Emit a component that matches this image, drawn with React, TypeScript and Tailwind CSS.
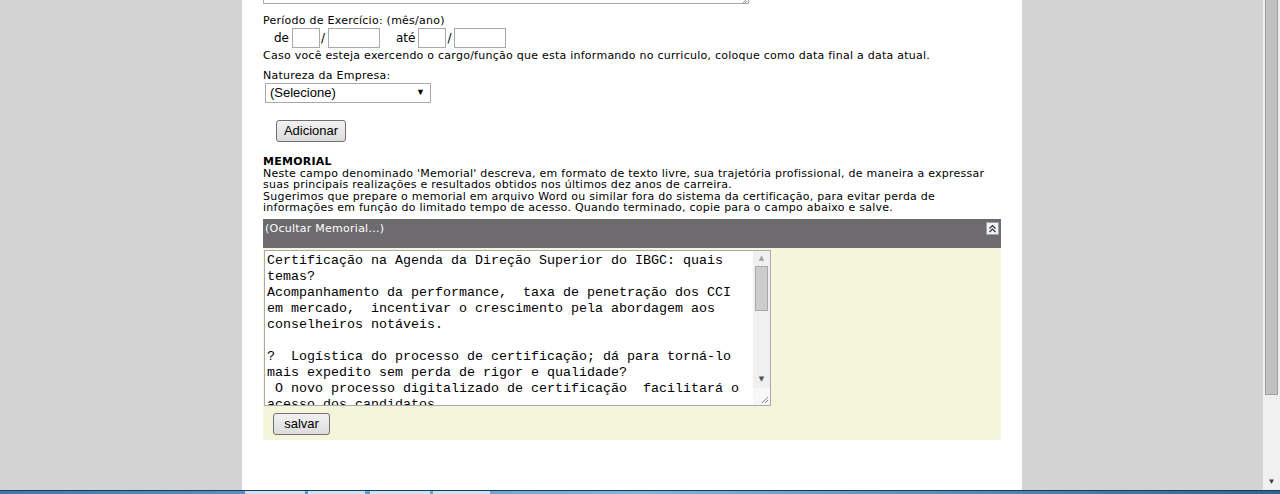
const memoLines = [
  "Certificação na Agenda da Direção Superior do IBGC: quais",
  "temas?",
  "Acompanhamento da performance,  taxa de penetração dos CCI",
  "em mercado,  incentivar o crescimento pela abordagem aos",
  "conselheiros notáveis.",
  "",
  "?  Logística do processo de certificação; dá para torná-lo",
  "mais expedito sem perda de rigor e qualidade?",
  " O novo processo digitalizado de certificação  facilitará o",
  "acesso dos candidatos.",
];

const verdana = "font-['DejaVu_Sans',Verdana,sans-serif]";

function Btn({ label, className }: { label: string; className: string }) {
  return (
    <div
      className={`flex items-center justify-center rounded-[3px] border border-[#707070] bg-gradient-to-b from-[#f2f2f2] to-[#dcdcdc] font-['Liberation_Sans',Arial,sans-serif] text-[13px] tracking-normal text-black ${className}`}
    >
      {label}
    </div>
  );
}

function Field({ w }: { w: string }) {
  return <div className={`h-[20px] border border-[#a9a9a9] bg-white ${w}`} />;
}

function Chevrons() {
  return (
    <div className="flex h-[13px] w-[13px] items-center justify-center border border-[#9aa4ac] bg-[#eef3f6]">
      <svg width="9" height="9" viewBox="0 0 9 9">
        <path d="M1.5 4.5 L4.5 1.5 L7.5 4.5 M1.5 8 L4.5 5 L7.5 8" fill="none" stroke="#333" strokeWidth="1.2" />
      </svg>
    </div>
  );
}

export default function App() {
  return (
    <div className="flex h-[494px] w-[1280px] flex-col overflow-hidden bg-[#d3d3d3]">
      <div className="flex h-[490px]">
        <div className="w-[242px]" />
        <main className={`w-[780px] bg-white pl-[21px] text-[11px] tracking-[0.25px] text-black ${verdana}`}>
          <div className="relative h-[4px] w-[486px] border-x border-b border-[#a9a9a9]">
            <svg className="absolute bottom-0 right-[1px]" width="6" height="3" viewBox="0 0 6 3">
              <path d="M5 0 L2 3 M6 1 L4 3" stroke="#999" strokeWidth="1" />
            </svg>
          </div>

          <p className="mt-[10px] leading-[13px]">Período de Exercício: (mês/ano)</p>
          <div className="mt-[1px] flex items-center text-[12px] tracking-normal">
            <span className="ml-[11px] mr-[3px]">de</span>
            <Field w="w-[28px]" />
            <span className="mx-[1px] w-[6px]">/</span>
            <Field w="w-[52px]" />
            <span className="ml-[16px] mr-[3px]">até</span>
            <Field w="w-[28px]" />
            <span className="mx-[1px] w-[6px]">/</span>
            <Field w="w-[52px]" />
          </div>
          <p className="mt-[1px] leading-[13px]">
            Caso você esteja exercendo o cargo/função que esta informando no curriculo, coloque como data final a data atual.
          </p>

          <p className="mt-[7px] leading-[13px]">Natureza da Empresa:</p>
          <div className="ml-[2px] mt-[1px] flex h-[20px] w-[166px] items-center justify-between border border-[#a9a9a9] bg-white pl-[4px] pr-[5px] font-['Liberation_Sans',Arial,sans-serif] text-[13px] tracking-normal">
            <span>(Selecione)</span>
            <span className="text-[9px]">▼</span>
          </div>

          <Btn label="Adicionar" className="ml-[13px] mt-[17px] h-[22px] w-[70px]" />

          <p className="mt-[14px] font-bold leading-[12px]">MEMORIAL</p>
          <div className="w-[730px] leading-[11.4px]">
            <p>
              Neste campo denominado 'Memorial' descreva, em formato de texto livre, sua trajetória profissional, de maneira a expressar suas principais realizações e resultados obtidos nos últimos dez anos de carreira.
            </p>
            <p>
              Sugerimos que prepare o memorial em arquivo Word ou similar fora do sistema da certificação, para evitar perda de informações em função do limitado tempo de acesso. Quando terminado, copie para o campo abaixo e salve.
            </p>
          </div>

          <section className="mt-[5px] w-[738px]">
            <div className="flex h-[29px] items-start justify-between bg-[#6d6b6e] pl-[2px] pr-[2px] pt-[3px] text-white">
              <span className="leading-[13px]">(Ocultar Memorial...)</span>
              <Chevrons />
            </div>
            <div className="bg-[#f5f5dc] pb-[5px] pl-[1px] pt-[2px]">
              <div className="flex h-[156px] w-[507px] border border-[#a9a9a9] bg-white">
                <div className="flex-1 overflow-hidden pl-[2px] pt-[2px] font-['Liberation_Mono','Courier_New',monospace] text-[13.33px] leading-[16px] tracking-normal">
                  {memoLines.map((l, i) => (
                    <div key={i} className="h-[16px] whitespace-pre">
                      {l}
                    </div>
                  ))}
                </div>
                <div className="flex w-[17px] flex-col bg-[#f0f0f0]">
                  <div className="flex h-[15px] items-center justify-center text-[7px] text-[#a0a0a0]">▲</div>
                  <div className="mx-auto h-[45px] w-[13px] border border-[#a9a9a9] bg-[#cdcdcd]" />
                  <div className="flex-1" />
                  <div className="flex h-[17px] items-center justify-center text-[7px] text-[#505050]">▼</div>
                  <div className="relative h-[17px] bg-[#f7f7f7]">
                    <svg className="absolute bottom-[1px] right-[1px]" width="8" height="8" viewBox="0 0 8 8">
                      <path d="M7 1 L1 7 M7 4 L4 7" stroke="#888" strokeWidth="1" />
                    </svg>
                  </div>
                </div>
              </div>
              <Btn label="salvar" className="ml-[9px] mt-[7px] h-[22px] w-[57px]" />
            </div>
          </section>
        </main>
        <div className="w-[241px]" />
        <div className="flex w-[17px] flex-col bg-[#f0f0f0]">
          <div className="mx-auto h-[395px] w-[13px] border border-t-0 border-[#a0a0a0] bg-[#c1c1c1]" />
          <div className="flex-1" />
          <div className="flex h-[18px] items-center justify-center text-[8px] text-[#404040]">▼</div>
        </div>
      </div>
      <div className="flex h-[4px] border-t border-[#1b3a5c] bg-gradient-to-r from-[#3b7bb0] via-[#7fb6dc] to-[#2c6594]">
        <div className="ml-[245px] w-[60px] bg-[#cde3f3]" />
        <div className="ml-[3px] w-[57px] bg-[#cde3f3]" />
        <div className="ml-[5px] w-[60px] bg-[#cde3f3]" />
        <div className="ml-[3px] w-[57px] bg-[#cde3f3]" />
      </div>
    </div>
  );
}
